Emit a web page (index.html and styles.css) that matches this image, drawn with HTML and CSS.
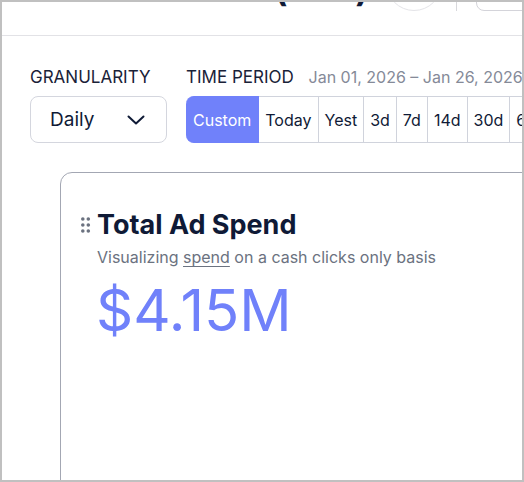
FILE: index.html
```html
<!DOCTYPE html>
<html lang="en">
<head>
    <meta charset="UTF-8">
    <meta name="viewport" content="width=device-width, initial-scale=1.0">
    <title>Ad Spend Dashboard</title>
    <link rel="stylesheet" href="styles.css">
</head>
<body>
    <header class="topbar">
        <div class="page-title">Ad Dashboard <span class="paren">(</span>2026<span class="paren">)</span></div>
        <button class="icon-button" aria-label="Account"></button>
        <span class="topbar-divider"></span>
        <div class="search-box"></div>
    </header>

    <section class="filters">
        <div class="filter-group">
            <label class="filter-label">GRANULARITY</label>
            <div class="select">
                <span>Daily</span>
                <svg class="chevron" width="18" height="10" viewBox="0 0 18 10">
                    <path d="M1.5 1.5 L9 8.5 L16.5 1.5" fill="none" stroke="#0f1a36" stroke-width="2" stroke-linecap="round" stroke-linejoin="round"/>
                </svg>
            </div>
        </div>
        <div class="filter-group">
            <div class="filter-label">TIME PERIOD <span class="date-range">Jan 01, 2026 – Jan 26, 2026</span></div>
            <div class="segmented">
                <button class="segment active">Custom</button>
                <button class="segment">Today</button>
                <button class="segment">Yest</button>
                <button class="segment">3d</button>
                <button class="segment">7d</button>
                <button class="segment">14d</button>
                <button class="segment">30d</button>
                <button class="segment">60d</button>
                <button class="segment">90d</button>
            </div>
        </div>
    </section>

    <div class="card">
        <div class="card-title">
            <svg class="handle" width="10" height="16" viewBox="0 0 10 16">
                <circle cx="1.8" cy="2" r="1.8" fill="#6b7280"/>
                <circle cx="7.3" cy="2" r="1.8" fill="#6b7280"/>
                <circle cx="1.8" cy="8" r="1.8" fill="#6b7280"/>
                <circle cx="7.3" cy="8" r="1.8" fill="#6b7280"/>
                <circle cx="1.8" cy="14" r="1.8" fill="#6b7280"/>
                <circle cx="7.3" cy="14" r="1.8" fill="#6b7280"/>
            </svg>
            <h2>Total Ad Spend</h2>
        </div>
        <p class="card-subtitle">Visualizing <u>spend</u> on a cash clicks only basis</p>
        <div class="metric">$4.15M</div>
    </div>
</body>
</html>
```

FILE: styles.css
```css
body {
    margin: 0;
    height: 482px;
    box-sizing: border-box;
    border: 2px solid #c0c0c0;
    overflow: hidden;
    background: #fff;
    font-family: Inter, "Noto Sans", sans-serif;
    color: #0f1a36;
}

.topbar {
    display: flex;
    align-items: flex-end;
    height: 34px;
    box-sizing: border-box;
    padding-bottom: 24px;
    border-bottom: 1px solid #e2e2e6;
    overflow: hidden;
}

.page-title {
    flex: 0 0 384px;
    box-sizing: border-box;
    padding-right: 16px;
    margin-bottom: 11px;
    text-align: right;
    font-size: 26px;
    font-weight: 700;
    line-height: 26px;
    white-space: nowrap;
}

.paren {
    font-size: 40px;
    font-weight: 600;
    vertical-align: -5px;
}

.icon-button {
    flex: 0 0 56px;
    height: 56px;
    border: 1px solid #e4e4e8;
    border-radius: 50%;
    background: #fff;
    padding: 0;
}

.topbar-divider {
    flex: 0 0 1px;
    height: 30px;
    margin: 0 19px 0 14px;
    background: #d8d8dc;
}

.search-box {
    flex: 0 0 100px;
    height: 36px;
    border: 1px solid #d4d4da;
    border-radius: 8px;
}

.filters {
    display: flex;
    gap: 19px;
    padding: 31px 0 0 28px;
    white-space: nowrap;
}

.filter-label {
    display: block;
    font-size: 17px;
    line-height: 21px;
    margin-bottom: 8px;
    color: #1a2238;
}

.date-range {
    margin-left: 10px;
    font-size: 16px;
    color: #858a98;
}

.select {
    display: flex;
    align-items: center;
    justify-content: space-between;
    width: 137px;
    height: 47px;
    box-sizing: border-box;
    padding: 0 21px 0 19px;
    border: 1px solid #d4d6de;
    border-radius: 8px;
    font-size: 19px;
}

.segmented {
    display: flex;
    height: 47px;
}

.segment {
    font-family: inherit;
    font-size: 16px;
    color: #0f1a36;
    background: #fff;
    padding: 0 6px;
    border: 1px solid #d0d3dc;
    border-left: none;
    cursor: pointer;
}

.segment.active {
    background: #7081fa;
    color: #fff;
    border-color: #7081fa;
    border-radius: 8px 0 0 8px;
    padding: 0 7px;
}

.card {
    width: 520px;
    height: 400px;
    margin: 29px 0 0 58px;
    padding: 36px 0 0 20px;
    box-sizing: border-box;
    border: 1px solid #a3a7b3;
    border-radius: 12px;
}

.card-title {
    display: flex;
    align-items: center;
    gap: 6px;
}

.card-title h2 {
    margin: 0;
    font-size: 27px;
    line-height: 32px;
    font-weight: 700;
}

.card-subtitle {
    margin: 6px 0 0 16px;
    font-size: 16px;
    line-height: 20px;
    color: #6b7280;
}

.card-subtitle u {
    text-underline-offset: 3px;
}

.metric {
    margin: 8px 0 0 15px;
    font-size: 58px;
    line-height: 70px;
    color: #7081fa;
}
```
